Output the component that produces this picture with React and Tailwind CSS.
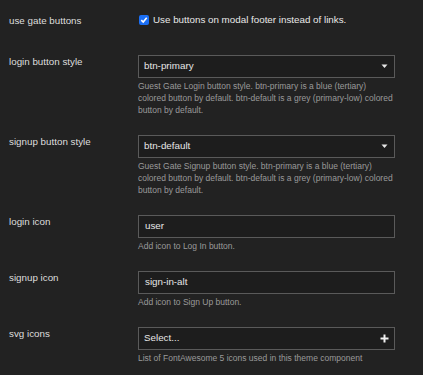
import React from "react";

const font = { fontFamily: '"Liberation Sans", Arial, sans-serif' };

function Desc({ children }) {
  return (
    <div className="mt-[2px] text-[8.5px] leading-[12px] text-[#9a9a9a]">{children}</div>
  );
}

function Row({ label, children, desc }) {
  return (
    <div className="flex mb-[19px]">
      <div className="w-[129px] shrink-0 pt-[1px] text-[9.8px] leading-[12px] text-[#dedede]">{label}</div>
      <div className="w-[257px] shrink-0">
        {children}
        <Desc>{desc}</Desc>
      </div>
    </div>
  );
}

function Box({ children, right, pl = "pl-[6px]" }) {
  return (
    <div className={`h-[23px] border border-[#5a5a5a] bg-[#1d1d1d] flex items-center justify-between ${pl} pr-[5px] text-[9.8px] text-[#e6e6e6]`}>
      <span>{children}</span>
      {right}
    </div>
  );
}

const Caret = (
  <svg width="7" height="5" viewBox="0 0 7 5" className="mr-[1px]">
    <path d="M0.5 0.5 H6.5 L3.5 4 Z" fill="#e6e6e6" />
  </svg>
);

const Plus = (
  <svg width="9" height="9" viewBox="0 0 9 9">
    <path d="M4.5 0.5 V8.5 M0.5 4.5 H8.5" stroke="#f0f0f0" strokeWidth="2" />
  </svg>
);

export default function App() {
  return (
    <div className="w-[423px] h-[375px] bg-[#222222] overflow-hidden pl-[9px] pt-[13px]" style={font}>
      <div className="flex mb-[28px]">
        <div className="w-[129px] shrink-0 pt-[2px] text-[9.8px] leading-[12px] text-[#dedede]">use gate buttons</div>
        <div className="flex items-center gap-[4px] text-[9.8px] leading-[12px] text-[#e8e8e8]">
          <div className="ml-[1px] w-[10px] h-[10px] rounded-[2px] bg-[#1b6ff5] flex items-center justify-center">
            <svg width="8" height="8" viewBox="0 0 8 8">
              <path d="M1.3 4.2 L3.2 6 L6.7 1.8" stroke="white" strokeWidth="1.6" fill="none" />
            </svg>
          </div>
          <span>Use buttons on modal footer instead of links.</span>
        </div>
      </div>

      <Row
        label="login button style"
        desc="Guest Gate Login button style. btn-primary is a blue (tertiary) colored button by default. btn-default is a grey (primary-low) colored button by default."
      >
        <Box pl="pl-[5px]" right={Caret}>btn-primary</Box>
      </Row>

      <Row
        label="signup button style"
        desc="Guest Gate Signup button style. btn-primary is a blue (tertiary) colored button by default. btn-default is a grey (primary-low) colored button by default."
      >
        <Box pl="pl-[5px]" right={Caret}>btn-default</Box>
      </Row>

      <Row label="login icon" desc="Add icon to Log In button.">
        <Box>user</Box>
      </Row>

      <Row label="signup icon" desc="Add icon to Sign Up button.">
        <Box>sign-in-alt</Box>
      </Row>

      <Row label="svg icons" desc="List of FontAwesome 5 icons used in this theme component">
        <Box pl="pl-[5px]" right={Plus}>Select...</Box>
      </Row>
    </div>
  );
}
